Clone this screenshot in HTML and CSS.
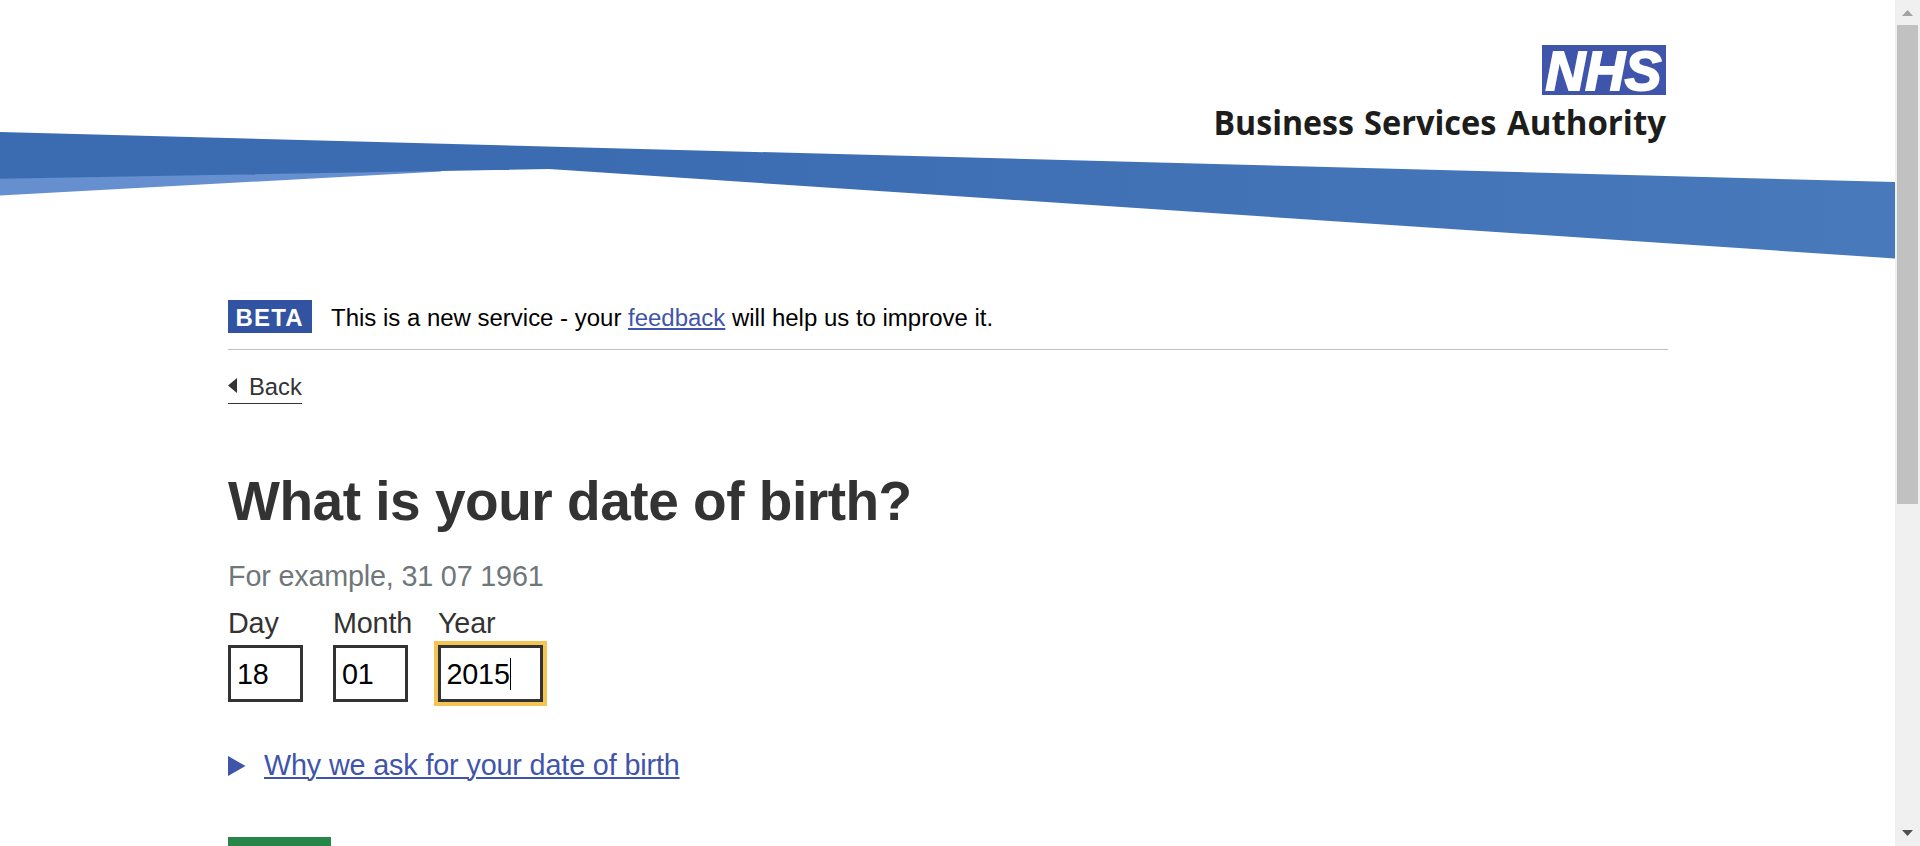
FILE: index.html
```html
<!DOCTYPE html>
<html lang="en">
<head>
<meta charset="utf-8">
<title>What is your date of birth?</title>
<link rel="stylesheet" href="styles.css">
</head>
<body>
<div class="page">
  <header class="header">
    <svg class="swoosh" viewBox="0 0 1895 259" aria-hidden="true">
      <defs><linearGradient id="band" x1="0" x2="1"><stop offset="0.3" stop-color="#3b6cb2"/><stop offset="1" stop-color="#4879bb"/></linearGradient></defs>
      <path d="M0 178L441 170V171.500L0 195.500Z" fill="#668fd0"/>
      <path d="M0 132L1895 182V258.500L549 169L441 171L0 178.700Z" fill="url(#band)"/>
    </svg>
    <svg class="logo" viewBox="0 0 454 100" role="img" aria-label="NHS Business Services Authority">
      <rect x="327" y="0" width="124" height="50" fill="#3f55ab"/>
      <text class="nhs" x="330.500" y="44.500" textLength="116" lengthAdjust="spacingAndGlyphs">NHS</text>
      <text class="authority" x="-1.500" y="90" textLength="140.500" lengthAdjust="spacingAndGlyphs">Business</text>
      <text class="authority" x="149" y="90" textLength="132.500" lengthAdjust="spacingAndGlyphs">Services</text>
      <text class="authority" x="292" y="90" textLength="159" lengthAdjust="spacingAndGlyphs">Authority</text>
    </svg>
  </header>
  <main class="content">
    <div class="phase"><strong class="tag">BETA</strong><span class="phase-text">This is a new service - your <a href="#">feedback</a> will help us to improve it.</span></div>
    <a class="back" href="#"><svg class="back-arrow" viewBox="0 0 9 15"><path d="M9 0V15L0 7.500Z" fill="#333"/></svg>Back</a>
    <h1 class="title">What is your date of birth?</h1>
    <p class="hint">For example, 31 07 1961</p>
    <div class="date">
      <label class="field">Day<span class="box">18</span></label>
      <label class="field">Month<span class="box">01</span></label>
      <label class="field">Year<span class="box year">2015<i class="caret"></i></span></label>
    </div>
    <div class="details"><svg class="marker" viewBox="0 0 18 20"><path d="M0 0L17.500 10L0 20Z" fill="#3f55ab"/></svg><a href="#">Why we ask for your date of birth</a></div>
    <div class="button"></div>
  </main>
</div>
<div class="scrollbar">
  <svg class="arrow" viewBox="0 0 25 25"><path d="M7 16L12.500 10L18 16Z" fill="#a3a3a3"/></svg>
  <div class="thumb"></div>
  <svg class="arrow end" viewBox="0 0 25 25"><path d="M7 9L12.500 15L18 9Z" fill="#505050"/></svg>
</div>
</body>
</html>
```
FILE: styles.css
```css
* { box-sizing: border-box; }
body { margin: 0; height: 846px; display: flex; overflow: hidden; background: #fff; font-family: "Liberation Sans", Arial, sans-serif; color: #333; }
a { color: #3f55ab; }
.page { width: 1895px; height: 846px; overflow: hidden; }
.header { height: 300px; display: grid; grid-template-columns: 1895px; }
.swoosh, .logo { grid-row: 1; grid-column: 1; }
.swoosh { width: 1895px; height: 259px; }
.logo { width: 454px; height: 100px; margin: 45px 0 0 1215px; overflow: visible; }
.nhs { font: italic 700 56px "Liberation Sans", Arial, sans-serif; fill: #fff; stroke: #fff; stroke-width: 2px; }
.authority { font: 700 34px "Open Sans", sans-serif; fill: #1d1d1b; }
.content { width: 1440px; margin-left: 228px; }
.phase { display: flex; align-items: center; height: 50px; padding-bottom: 16px; border-bottom: 1px solid #bfc1c3; color: #000; font-size: 23.97px; line-height: 33px; }
.tag { width: 84px; height: 33px; margin-right: 19px; padding-left: 7.5px; background: #3153a2; color: #fff; letter-spacing: 1.2px; line-height: 35px; }
.phase-text { padding-top: 2px; }
.phase a { text-decoration-thickness: 2px; text-underline-offset: 2px; }
.back { display: flex; align-items: center; width: 74px; height: 33px; margin-top: 21px; border-bottom: 1px solid #333; color: #333; font-size: 23.75px; text-decoration: none; }
.back-arrow { width: 9px; height: 15px; margin: 0 12px 3px 0; }
.title { margin: 63px 0 0; height: 69px; font-size: 55px; line-height: 68px; letter-spacing: -0.48px; white-space: nowrap; }
.hint { margin: 22px 0 0; font-size: 28.75px; line-height: 36px; letter-spacing: -0.18px; color: #6f777b; }
.date { display: flex; gap: 30px; margin-top: 11px; }
.field { display: flex; flex-direction: column; width: 75px; font-size: 28.75px; line-height: 36px; letter-spacing: -0.18px; }
.box { display: flex; align-items: center; width: 75px; height: 57px; margin-top: 4px; padding: 0 6px; border: 3px solid #333; background: #fff; color: #000; }
.year { width: 105px; padding-left: 5.5px; outline: 4px solid #f4c554; }
.caret { width: 1px; height: 32px; background: #000; }
.details { display: flex; align-items: center; gap: 18px; height: 36px; margin-top: 46px; font-size: 28.75px; letter-spacing: -0.14px; }
.details a { margin-top: -2px; text-decoration-thickness: 2px; text-underline-offset: 2px; white-space: nowrap; }
.marker { width: 18px; height: 20px; margin-top: -1px; }
.button { width: 103px; height: 50px; margin-top: 53px; background: #268548; }
.scrollbar { display: flex; flex-direction: column; width: 25px; height: 846px; background: #f0f0f0; }
.arrow { width: 25px; height: 25px; }
.thumb { width: 21px; height: 479px; margin-left: 2px; background: #c1c1c1; }
.end { margin-top: auto; }
```
